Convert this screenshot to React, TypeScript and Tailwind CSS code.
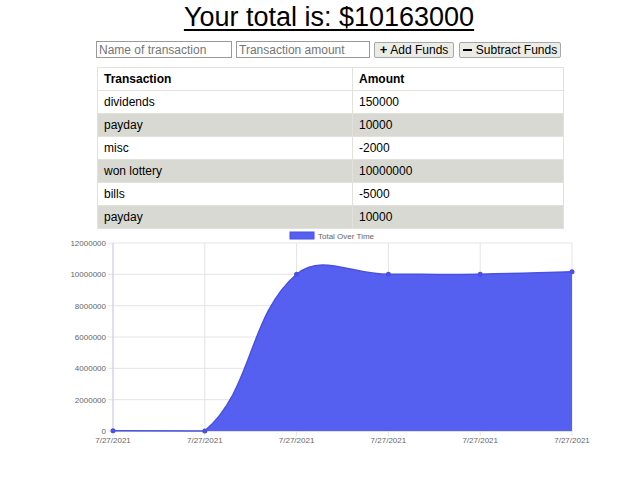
import React from 'react';

type Pt = { x: number; y: number };

const rows = [
  { name: 'dividends', amount: '150000' },
  { name: 'payday', amount: '10000' },
  { name: 'misc', amount: '-2000' },
  { name: 'won lottery', amount: '10000000' },
  { name: 'bills', amount: '-5000' },
  { name: 'payday', amount: '10000' },
];

const TOP = 243;
const BOTTOM = 431;
const LEFT = 113;
const RIGHT = 572;

// cumulative totals, oldest first
const totals = [10000, 5000, 10005000, 10003000, 10013000, 10163000];
const yTicks = [12000000, 10000000, 8000000, 6000000, 4000000, 2000000, 0];

const toY = (v: number) => BOTTOM - (v / 12000000) * (BOTTOM - TOP);
const points: Pt[] = totals.map((v, i) => ({
  x: LEFT + (i * (RIGHT - LEFT)) / (totals.length - 1),
  y: toY(v),
}));

// same spline as chart.js (tension 0.4)
const control = (prev: Pt, cur: Pt, next: Pt, t: number) => {
  const d01 = Math.hypot(cur.x - prev.x, cur.y - prev.y);
  const d12 = Math.hypot(next.x - cur.x, next.y - cur.y);
  let s01 = d01 / (d01 + d12 || 1);
  let s12 = d12 / (d01 + d12 || 1);
  s01 = isNaN(s01) ? 0 : s01;
  s12 = isNaN(s12) ? 0 : s12;
  const fa = t * s01;
  const fb = t * s12;
  return {
    prev: { x: cur.x - fa * (next.x - prev.x), y: cur.y - fa * (next.y - prev.y) },
    next: { x: cur.x + fb * (next.x - prev.x), y: cur.y + fb * (next.y - prev.y) },
  };
};

const buildPath = () => {
  const cps = points.map((p, i) =>
    control(points[i - 1] || p, p, points[i + 1] || p, 0.4)
  );
  let d = `M${points[0].x},${points[0].y}`;
  for (let i = 1; i < points.length; i++) {
    const a = cps[i - 1].next;
    const b = cps[i].prev;
    d += ` C${a.x},${Math.min(Math.max(a.y, TOP), BOTTOM)} ${b.x},${Math.min(Math.max(b.y, TOP), BOTTOM)} ${points[i].x},${points[i].y}`;
  }
  return d;
};

const Chart: React.FC = () => {
  const line = buildPath();
  const area = `${line} L${RIGHT},${BOTTOM} L${LEFT},${BOTTOM} Z`;
  return (
    <svg width="640" height="222" viewBox="0 229 640 222" className="block" style={{ fontFamily: '"Liberation Sans", Arial, sans-serif' }}>
      <rect x="290" y="232" width="24" height="7" fill="#5660f0" stroke="#4a50e0" strokeWidth="1" />
      <text x="318" y="238.5" fontSize="8" fill="#666">Total Over Time</text>

      {yTicks.map((v) => (
        <g key={v}>
          <line x1={LEFT - 5} x2={RIGHT} y1={toY(v)} y2={toY(v)} stroke="#e4e4e4" strokeWidth="1" />
          <text x={LEFT - 7} y={toY(v) + 3} fontSize="8" fill="#666" textAnchor="end">{v}</text>
        </g>
      ))}
      {points.map((p, i) => (
        <g key={i}>
          <line x1={p.x} x2={p.x} y1={TOP} y2={BOTTOM + 5} stroke="#e4e4e4" strokeWidth="1" />
          <text x={p.x} y={BOTTOM + 12} fontSize="8" fill="#666" textAnchor="middle">7/27/2021</text>
        </g>
      ))}
      <line x1={LEFT} x2={LEFT} y1={TOP} y2={BOTTOM} stroke="#cfcfe8" strokeWidth="1" />
      <line x1={LEFT} x2={RIGHT} y1={BOTTOM} y2={BOTTOM} stroke="#cfcfcf" strokeWidth="1" />

      <path d={area} fill="#5660f0" />
      <path d={line} fill="none" stroke="#4a50e0" strokeWidth="1.5" />
      {points.map((p, i) => (
        <circle key={i} cx={p.x} cy={p.y} r="2.5" fill="#4a50e0" />
      ))}
    </svg>
  );
};

const App: React.FC = () => {
  return (
    <div className="w-[640px] h-[480px] bg-white text-black overflow-hidden" style={{ fontFamily: '"Liberation Sans", Arial, sans-serif' }}>
      <h1 className="text-center pl-[18px] text-[27px] leading-[31px] pt-[2px] underline decoration-[2px] underline-offset-[3px]">
        Your total is: $10163000
      </h1>

      <div className="flex items-center ml-[96px] mt-[8px] h-[17px] text-[12px]">
        <input
          placeholder="Name of transaction"
          className="w-[136px] h-[17px] px-[2px] border border-[#9a9a9a] placeholder:text-[#757575] outline-none"
        />
        <input
          placeholder="Transaction amount"
          className="ml-[4px] w-[134px] h-[17px] px-[2px] border border-[#9a9a9a] placeholder:text-[#757575] outline-none"
        />
        <button className="ml-[4px] w-[80px] h-[16px] flex items-center justify-center gap-[3px] bg-[#ecece6] border border-[#a8a8a8] rounded-[2px] leading-none">
          <span className="font-bold text-[13px] leading-none">+</span>Add Funds
        </button>
        <button className="ml-[5px] w-[102px] h-[16px] flex items-center justify-center gap-[4px] bg-[#ecece6] border border-[#a8a8a8] rounded-[2px] leading-none">
          <span className="inline-block w-[9px] h-[2px] bg-black"></span>Subtract Funds
        </button>
      </div>

      <table className="ml-[97px] mt-[9px] w-[467px] text-[12px] border-collapse border border-[#e2e2da]">
        <thead>
          <tr className="h-[23px]">
            <th className="w-[255px] text-left font-bold pl-[6px] border border-[#e2e2da]">Transaction</th>
            <th className="text-left font-bold pl-[6px] border border-[#e2e2da]">Amount</th>
          </tr>
        </thead>
        <tbody>
          {rows.map((row, index) => (
            <tr key={index} className={`h-[23px] ${index % 2 === 1 ? 'bg-[#d9d9d3]' : 'bg-white'}`}>
              <td className="pl-[6px] border border-[#e2e2da]">{row.name}</td>
              <td className="pl-[6px] border border-[#e2e2da]">{row.amount}</td>
            </tr>
          ))}
        </tbody>
      </table>

      <Chart />
    </div>
  );
};

export default App;
